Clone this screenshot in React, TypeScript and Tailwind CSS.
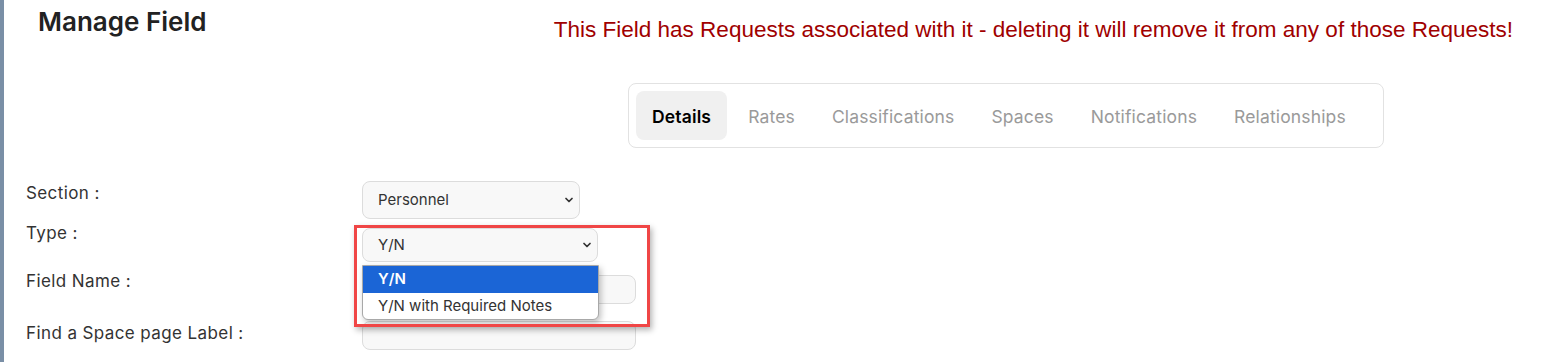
import * as React from 'react';
import { ChevronDown } from 'lucide-react';

const tabs = ['Details', 'Rates', 'Classifications', 'Spaces', 'Notifications', 'Relationships'];

// Closed native select look
function FakeSelect({ value, width, height }: { value: string; width: string; height: string }) {
  return (
    <div
      className={`flex items-center justify-between rounded-lg border border-[#dcdcdc] bg-[#f8f8f8] pl-[15px] pr-[4px] text-[15px] text-[#333] ${width} ${height}`}
    >
      <span>{value}</span>
      <ChevronDown size={12} strokeWidth={3.5} className="text-[#333]" />
    </div>
  );
}

export default function App() {
  return (
    <div className="flex min-h-[362px] w-full bg-white" style={{ fontFamily: 'Inter, "Noto Sans", sans-serif' }}>
      {/* left frame stripe */}
      <div className="w-[4px] shrink-0 bg-[#7a8fa6]" />

      <div className="relative flex-1">
        {/* Header */}
        <div className="flex h-[83px] items-start justify-between">
          <h1 className="pl-[34px] pt-[7px] text-[26px] font-semibold leading-[30px] text-[#222]">Manage Field</h1>
          <p
            className="pr-[33px] pt-[17px] text-[22.5px] leading-[26px] text-[#a00000]"
            style={{ fontFamily: '"Liberation Sans", Arial, sans-serif' }}
          >
            This Field has Requests associated with it - deleting it will remove it from any of those Requests!
          </p>
        </div>

        {/* Tabs */}
        <div className="ml-[624px] flex h-[65px] w-[756px] items-center rounded-lg border border-[#e2e2e2] px-[7px]">
          {tabs.map((t, i) => (
            <div
              key={t}
              className={`flex h-[49px] items-center rounded-lg px-4 pt-[4px] text-[17.5px] tracking-[0.15px] ${
                i === 0 ? 'bg-[#f0f0f0] font-semibold text-black' : 'text-[#9a9a9a]'
              } ${i > 0 ? 'ml-[5px]' : ''}`}
            >
              {t}
            </div>
          ))}
        </div>

        {/* Form */}
        <div className="mt-[33px] flex">
          <div className="w-[358px] pl-[22px] text-[17px] leading-5 tracking-[0.4px] text-[#333]">
            <div className="mt-[2px]">Section :</div>
            <div className="mt-[20px]">Type :</div>
            <div className="mt-[28px]">Field Name :</div>
            <div className="mt-[32px]">Find a Space page Label :</div>
          </div>

          <div className="relative">
            <FakeSelect value="Personnel" width="w-[218px]" height="h-[38px]" />
            <div className="mt-[9px]">
              <FakeSelect value="Y/N" width="w-[236px]" height="h-[34px]" />
            </div>
            <div className="mt-[13px] h-[29px] w-[274px] rounded-lg border border-[#dcdcdc] bg-[#f8f8f8]" />
            <div className="mt-[17px] h-[29px] w-[274px] rounded-lg border border-[#dcdcdc] bg-[#f8f8f8]" />

            {/* open dropdown list */}
            <div className="absolute left-0 top-[84px] w-[237px] overflow-hidden rounded-b-md border border-[#a8a8a8] bg-white text-[15px] shadow-[2px_3px_6px_rgba(0,0,0,0.25)]">
              <div className="flex h-[27px] items-center bg-[#1b65d6] pl-[15px] font-semibold text-white">Y/N</div>
              <div className="flex h-[26px] items-center pl-[15px] text-[#333]">Y/N with Required Notes</div>
            </div>

            {/* highlight box */}
            <div className="pointer-events-none absolute left-[-8px] top-[44px] h-[102px] w-[296px] border-[3px] border-[#f04646] shadow-[2px_3px_6px_rgba(0,0,0,0.3)]" />
          </div>
        </div>
      </div>
    </div>
  );
}
